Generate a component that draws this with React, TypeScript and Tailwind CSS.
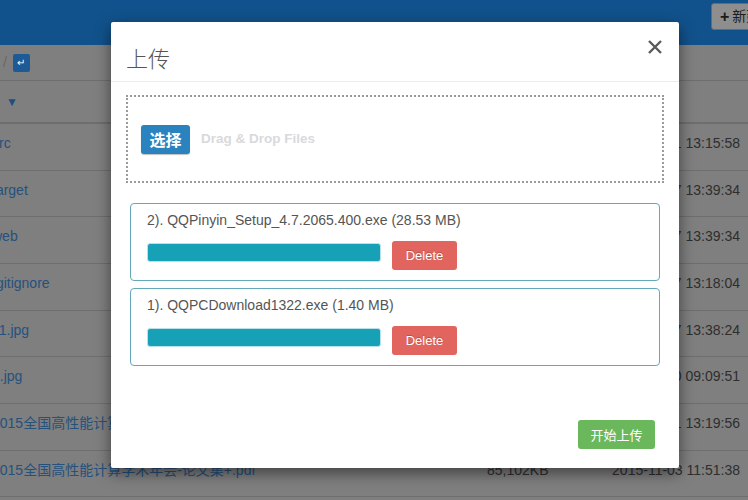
import React from "react";

const rows = [
  { name: "src", size: "", date: "2015-11-11 13:15:58" },
  { name: "target", size: "", date: "2015-11-17 13:39:34" },
  { name: "web", size: "", date: "2015-11-17 13:39:34" },
  { name: ".gitignore", size: "1KB", date: "2015-11-17 13:18:04" },
  { name: "11.jpg", size: "120KB", date: "2015-11-17 13:38:24" },
  { name: "2.jpg", size: "98KB", date: "2015-11-10 09:09:51" },
  { name: "2015全国高性能计算学术年会-论文集.rar", size: "80,211KB", date: "2015-11-11 13:19:56" },
  { name: "2015全国高性能计算学术年会-论文集+.pdf", size: "85,102KB", date: "2015-11-03 11:51:38" },
];

const files = [
  { label: "2). QQPinyin_Setup_4.7.2065.400.exe (28.53 MB)" },
  { label: "1). QQPCDownload1322.exe (1.40 MB)" },
];

export default function App() {
  return (
    <div className="relative w-[748px] h-[500px] overflow-hidden bg-[#7f7f7f] font-['Liberation_Sans','Noto_Sans_CJK_SC',sans-serif]">
      {/* top bar */}
      <div className="h-[45px] bg-[#11528c] flex items-start pt-[3px]">
        <div className="ml-[711px] shrink-0 h-[27px] w-[60px] flex items-center pl-[8px] gap-[3px] bg-[#8e8e8e] border border-[#6a6a6a] rounded-[3px] text-[14px] text-[#1c1c1c] whitespace-nowrap">
          <span className="font-bold text-[16px] leading-none">+</span>
          <span>新建</span>
        </div>
      </div>
      {/* breadcrumb */}
      <div className="h-[35px] flex items-center pl-[3px] gap-[6px]">
        <span className="text-[14px] text-[#686868]">/</span>
        <span className="w-[17px] h-[18px] rounded-[2px] bg-[#1d5b96] flex items-center justify-center text-white text-[10px] leading-none">↵</span>
      </div>
      {/* table head */}
      <div className="h-[44px] border-t border-b-2 border-[#6e6e6e] flex items-center pl-[6px]">
        <span className="text-[12px] text-[#1d4f80]">▼</span>
      </div>
      {/* rows */}
      {rows.map((r, i) => (
        <div key={i} className="h-[46.67px] border-b border-[#6e6e6e] flex items-start pt-[9px] text-[14px] leading-[20px] whitespace-nowrap">
          <span className="-ml-[8px] w-[495px] shrink-0 text-[#25517d] overflow-hidden">{r.name}</span>
          <span className="text-[#2e2e2e] w-[120px] shrink-0">{r.size}</span>
          <span className="ml-auto pr-[8px] text-[#2e2e2e]">{r.date}</span>
        </div>
      ))}

      {/* modal */}
      <div className="absolute left-[111px] top-[22px] w-[568px] h-[446px] bg-white rounded-[2px] shadow-[0_5px_15px_rgba(0,0,0,0.5)] flex flex-col">
        <div className="h-[60px] border-b border-[#ececec] flex items-start justify-between pl-[15px] pr-[17px] pt-[18px] shrink-0">
          <span className="text-[22px] leading-[33px] mt-[1px] text-[#555] font-light font-['Noto_Sans_CJK_SC',sans-serif]">上传</span>
          <svg width="14" height="14" viewBox="0 0 14 14">
            <path d="M1 1 L13 13 M13 1 L1 13" stroke="#5a5a5a" strokeWidth="2.4" strokeLinecap="butt" />
          </svg>
        </div>
        <div className="px-[15px] pt-[13px]">
          <div className="h-[88px] border-2 border-dotted border-[#9a9a9a] flex items-center pl-[13px]">
            <div className="w-[49px] h-[29px] bg-[#2a83bf] rounded-[3px] flex items-center justify-center text-white text-[16px] font-bold font-['Noto_Sans_CJK_SC',sans-serif] shadow-[0_1px_1px_rgba(0,0,0,0.25)]">
              选择
            </div>
            <span className="ml-[11px] text-[13.5px] font-bold text-[#d9d9dc]">Drag &amp; Drop Files</span>
          </div>
          <div className="mt-[20px] mx-[4px] flex flex-col gap-[7px]">
            {files.map((f, i) => (
              <div key={i} className="h-[78px] border border-[#63a9b9] rounded-[4px] px-[16px] pt-[6px]">
                <div className="text-[14px] leading-[20px] text-[#555] whitespace-nowrap">{f.label}</div>
                <div className="mt-[11px] flex items-start">
                  <div className="mt-[2px] w-[234px] h-[19px] rounded-[3px] bg-[#17a1b6] border border-[#b9e1ea]" />
                  <div className="ml-[11px] w-[65px] h-[29px] rounded-[3px] bg-[#e1645e] flex items-center justify-center text-white text-[13px] [text-shadow:0_-1px_0_rgba(0,0,0,0.2)]">
                    Delete
                  </div>
                </div>
              </div>
            ))}
          </div>
        </div>
        <div className="mt-auto flex justify-end pr-[24px] pb-[19px]">
          <div className="w-[77px] h-[29px] rounded-[3px] bg-[#6ab75c] flex items-center justify-center text-white text-[13px] font-['Noto_Sans_CJK_SC',sans-serif]">
            开始上传
          </div>
        </div>
      </div>
    </div>
  );
}
